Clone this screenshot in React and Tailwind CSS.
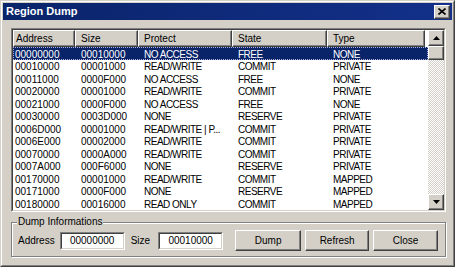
import React from 'react';

const rows = [
  ['00000000', '00010000', 'NO ACCESS', 'FREE', 'NONE'],
  ['00010000', '00001000', 'READ/WRITE', 'COMMIT', 'PRIVATE'],
  ['00011000', '0000F000', 'NO ACCESS', 'FREE', 'NONE'],
  ['00020000', '00001000', 'READ/WRITE', 'COMMIT', 'PRIVATE'],
  ['00021000', '0000F000', 'NO ACCESS', 'FREE', 'NONE'],
  ['00030000', '0003D000', 'NONE', 'RESERVE', 'PRIVATE'],
  ['0006D000', '00001000', 'READ/WRITE | P...', 'COMMIT', 'PRIVATE'],
  ['0006E000', '00002000', 'READ/WRITE', 'COMMIT', 'PRIVATE'],
  ['00070000', '0000A000', 'READ/WRITE', 'COMMIT', 'PRIVATE'],
  ['0007A000', '000F6000', 'NONE', 'RESERVE', 'PRIVATE'],
  ['00170000', '00001000', 'READ/WRITE', 'COMMIT', 'MAPPED'],
  ['00171000', '0000F000', 'NONE', 'RESERVE', 'MAPPED'],
  ['00180000', '00016000', 'READ ONLY', 'COMMIT', 'MAPPED'],
];

const columns = [
  { label: 'Address', w: 'w-[62px]', pad: 'pl-[2px]', cell: 'pl-[2px]' },
  { label: 'Size', w: 'w-[63px]', pad: 'pl-[5px]', cell: 'pl-[6px]' },
  { label: 'Protect', w: 'w-[94px]', pad: 'pl-[5px]', cell: 'pl-[6px] tracking-[-0.5px]' },
  { label: 'State', w: 'w-[95px]', pad: 'pl-[5px]', cell: 'pl-[6px] tracking-[-0.5px]' },
  { label: 'Type', w: 'w-[98px]', pad: 'pl-[5px]', cell: 'pl-[6px] tracking-[-0.5px]' },
];

// raised 3d look used by buttons and header cells
const raised =
  'bg-[#d4d0c8] border border-t-white border-l-white border-r-[#404040] border-b-[#404040] shadow-[inset_-1px_-1px_0_#808080]';

const Arrow = ({ down }) => (
  <svg width="7" height="4" viewBox="0 0 7 4" className={down ? 'rotate-180' : ''}>
    <path d="M3.5 0 L7 4 L0 4 Z" fill="#000" />
  </svg>
);

const Sunken = ({ className, children }) => (
  <div className={`border border-t-[#808080] border-l-[#808080] border-r-white border-b-white ${className}`}>
    <div className="h-full w-full border border-t-[#404040] border-l-[#404040] border-r-[#d4d0c8] border-b-[#d4d0c8] bg-white">
      {children}
    </div>
  </div>
);

const Button = ({ children, w }) => (
  <button className={`${raised} ${w} h-[21px] text-[10px] text-black flex items-center justify-center`}>
    {children}
  </button>
);

export default function App() {
  return (
    <div
      className="w-[455px] h-[267px] border border-t-[#d4d0c8] border-l-[#d4d0c8] border-r-[#404040] border-b-[#404040] bg-[#d4d0c8] overflow-hidden"
      style={{ fontFamily: '"Liberation Sans", Arial, sans-serif' }}
    >
      <div className="h-full border border-t-white border-l-white border-r-[#808080] border-b-[#808080] p-[1px] flex flex-col">
        {/* Title bar */}
        <div className="h-[17px] flex items-center justify-between bg-gradient-to-r from-[#0a246a] to-[#13308a] pl-[3px] pr-[2px]">
          <span className="text-white font-bold text-[11px] leading-none">Region Dump</span>
          <div className={`${raised} w-[16px] h-[14px] flex items-center justify-center`}>
            <svg width="8" height="7" viewBox="0 0 8 7">
              <path d="M0.5 0.5 L7.5 6.5 M7.5 0.5 L0.5 6.5" stroke="#000" strokeWidth="1.6" />
            </svg>
          </div>
        </div>

        <div className="flex-1 flex flex-col pl-[8px] pr-[6px] pt-[8px]">
          {/* Region list */}
          <Sunken className="h-[184px]">
            <div className="flex h-full">
              <div className="flex-1 flex flex-col overflow-hidden">
                <div className="flex h-[17px] shrink-0">
                  {columns.map((c) => (
                    <div
                      key={c.label}
                      className={`${raised} ${c.w} ${c.pad} shrink-0 flex items-center text-[10px] text-black`}
                    >
                      {c.label}
                    </div>
                  ))}
                </div>
                {rows.map((r, i) => (
                  <div
                    key={i}
                    className={`flex h-[12.5px] shrink-0 items-center pt-[3px] text-[10px] leading-none ${
                      i === 0
                        ? 'bg-[#0a246a] text-white outline outline-1 outline-dotted outline-[#b0b0e0] -outline-offset-1'
                        : 'text-black'
                    }`}
                  >
                    {r.map((v, j) => (
                      <div key={j} className={`${columns[j].w} ${columns[j].cell} shrink-0 whitespace-nowrap overflow-hidden`}>
                        {v}
                      </div>
                    ))}
                  </div>
                ))}
              </div>
              {/* Scrollbar */}
              <div className="w-[16px] flex flex-col bg-[repeating-conic-gradient(#d4d0c8_0_25%,#ffffff_0_50%)] bg-[length:2px_2px]">
                <div className={`${raised} h-[16px] flex items-center justify-center`}>
                  <Arrow />
                </div>
                <div className={`${raised} h-[14px]`} />
                <div className="flex-1" />
                <div className={`${raised} h-[16px] flex items-center justify-center`}>
                  <Arrow down />
                </div>
              </div>
            </div>
          </Sunken>

          {/* Dump informations group */}
          <div className="relative mt-[10px] h-[35px] border border-[#808080] shadow-[inset_1px_1px_0_#ffffff,1px_1px_0_#ffffff] flex items-center pl-[6px] pt-[2px]">
            <span className="absolute -top-[7px] left-[5px] bg-[#d4d0c8] px-[1px] text-[10px] leading-[12px] text-black">
              Dump Informations
            </span>
            <span className="text-[10px] text-black">Address</span>
            <Sunken className="ml-[5px] w-[65px] h-[18px]">
              <div className="h-full flex items-center justify-center text-[10px] text-black">00000000</div>
            </Sunken>
            <span className="ml-[6px] text-[10px] text-black">Size</span>
            <Sunken className="ml-[8px] w-[65px] h-[18px]">
              <div className="h-full flex items-center justify-center text-[10px] text-black">00010000</div>
            </Sunken>
            <div className="ml-[12px] flex gap-[4px]">
              <Button w="w-[66px]">Dump</Button>
              <Button w="w-[64px]">Refresh</Button>
              <Button w="w-[65px]">Close</Button>
            </div>
          </div>
        </div>
      </div>
    </div>
  );
}
